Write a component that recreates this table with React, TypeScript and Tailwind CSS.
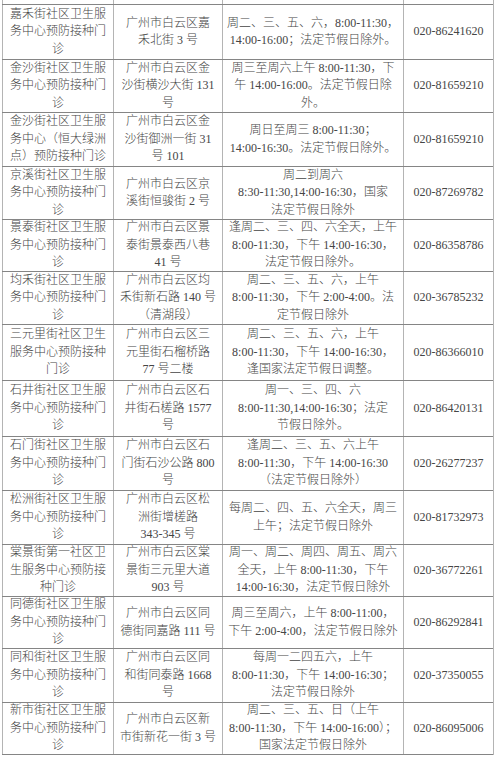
import React from 'react';

type Row = {
  h: string;
  name: string[];
  addr: string[];
  hours: string[];
  tel: string;
};

const rows: Row[] = [
  {
    h: 'h-[55px]',
    name: ['嘉禾街社区卫生服', '务中心预防接种门', '诊'],
    addr: ['广州市白云区嘉', '禾北街 3 号'],
    hours: ['周二、三、五、六，8:00-11:30，', '14:00-16:00；法定节假日除外。'],
    tel: '020-86241620',
  },
  {
    h: 'h-[53px]',
    name: ['金沙街社区卫生服', '务中心预防接种门', '诊'],
    addr: ['广州市白云区金', '沙街横沙大街 131', '号'],
    hours: ['周三至周六上午 8:00-11:30，下', '午 14:00-16:00。法定节假日除', '外。'],
    tel: '020-81659210',
  },
  {
    h: 'h-[54px]',
    name: ['金沙街社区卫生服', '务中心（恒大绿洲', '点）预防接种门诊'],
    addr: ['广州市白云区金', '沙街御洲一街 31', '号 101'],
    hours: ['周日至周三 8:00-11:30；', '14:00-16:30。法定节假日除外。'],
    tel: '020-81659210',
  },
  {
    h: 'h-[53px]',
    name: ['京溪街社区卫生服', '务中心预防接种门', '诊'],
    addr: ['广州市白云区京', '溪街恒骏街 2 号'],
    hours: ['周二到周六', '8:30-11:30,14:00-16:30，国家', '法定节假日除外'],
    tel: '020-87269782',
  },
  {
    h: 'h-[52px]',
    name: ['景泰街社区卫生服', '务中心预防接种门', '诊'],
    addr: ['广州市白云区景', '泰街景泰西八巷', '41 号'],
    hours: ['逢周二、三、四、六全天，上午', '8:00-11:30，下午 14:00-16:30，', '法定节假日除外。'],
    tel: '020-86358786',
  },
  {
    h: 'h-[53px]',
    name: ['均禾街社区卫生服', '务中心预防接种门', '诊'],
    addr: ['广州市白云区均', '禾街新石路 140 号', '（清湖段）'],
    hours: ['周二、三、五、六，上午', '8:00-11:30，下午 2:00-4:00。法', '定节假日除外'],
    tel: '020-36785232',
  },
  {
    h: 'h-[56px]',
    name: ['三元里街社区卫生', '服务中心预防接种', '门诊'],
    addr: ['广州市白云区三', '元里街石榴桥路', '77 号二楼'],
    hours: ['周二、三、五、六，上午', '8:00-11:30，下午 14:00-16:30，', '逢国家法定节假日调整。'],
    tel: '020-86366010',
  },
  {
    h: 'h-[56px]',
    name: ['石井街社区卫生服', '务中心预防接种门', '诊'],
    addr: ['广州市白云区石', '井街石槎路 1577', '号'],
    hours: ['周一、三、四、六', '8:00-11:30,14:00-16:30；法定', '节假日除外。'],
    tel: '020-86420131',
  },
  {
    h: 'h-[54px]',
    name: ['石门街社区卫生服', '务中心预防接种门', '诊'],
    addr: ['广州市白云区石', '门街石沙公路 800', '号'],
    hours: ['逢周二、三、五、六上午', '8:00-11:30，下午 14:00-16:30', '（法定节假日除外）'],
    tel: '020-26277237',
  },
  {
    h: 'h-[54px]',
    name: ['松洲街社区卫生服', '务中心预防接种门', '诊'],
    addr: ['广州市白云区松', '洲街增槎路', '343-345 号'],
    hours: ['每周二、四、五、六全天，周三', '上午；法定节假日除外'],
    tel: '020-81732973',
  },
  {
    h: 'h-[52px]',
    name: ['棠景街第一社区卫', '生服务中心预防接', '种门诊'],
    addr: ['广州市白云区棠', '景街三元里大道', '903 号'],
    hours: ['周一、周二、周四、周五、周六', '全天，上午 8:00-11:30，下午', '14:00-16:30，法定节假日除外'],
    tel: '020-36772261',
  },
  {
    h: 'h-[52px]',
    name: ['同德街社区卫生服', '务中心预防接种门', '诊'],
    addr: ['广州市白云区同', '德街同嘉路 111 号'],
    hours: ['周三至周六，上午 8:00-11:00，', '下午 2:00-4:00，法定节假日除外'],
    tel: '020-86292841',
  },
  {
    h: 'h-[54px]',
    name: ['同和街社区卫生服', '务中心预防接种门', '诊'],
    addr: ['广州市白云区同', '和街同泰路 1668', '号'],
    hours: ['每周一二四五六，上午', '8:00-11:30，下午 14:00-16:30；', '法定节假日除外'],
    tel: '020-37350055',
  },
  {
    h: 'h-[52px]',
    name: ['新市街社区卫生服', '务中心预防接种门', '诊'],
    addr: ['广州市白云区新', '市街新花一街 3 号'],
    hours: ['周二、三、五、日（上午', '8:00-11:30，下午 14:00-16:00）；', '国家法定节假日除外'],
    tel: '020-86095006',
  },
];

const Cell = ({ lines, w }: { lines: string[]; w: string }) => (
  <div className={`${w} shrink-0 border-l border-[#b4b4b4] flex flex-col items-center justify-center`}>
    {lines.map((l, i) => (
      <span key={i} className="whitespace-nowrap leading-[17.5px]">
        {l}
      </span>
    ))}
  </div>
);

const App: React.FC = () => {
  return (
    <div
      className="w-[496px] h-[757px] bg-white pl-[2px] overflow-hidden text-[12px] font-light text-[#454545]"
      style={{ fontFamily: '"Liberation Serif", "Noto Sans CJK SC", serif' }}
    >
      <div className="w-[492px] border-r border-[#b4b4b4]">
        <div className="flex h-[5px] border-b border-[#858585]">
          <div className="w-[111px] border-l border-[#b4b4b4]" />
          <div className="w-[109px] border-l border-[#b4b4b4]" />
          <div className="w-[181px] border-l border-[#b4b4b4]" />
          <div className="w-[90px] border-l border-[#b4b4b4]" />
        </div>
        {rows.map((r, i) => (
          <div key={i} className={`flex ${r.h} border-b border-[#858585] box-border`}>
            <Cell lines={r.name} w="w-[111px]" />
            <Cell lines={r.addr} w="w-[109px]" />
            <Cell lines={r.hours} w="w-[181px]" />
            <Cell lines={[r.tel]} w="w-[90px]" />
          </div>
        ))}
      </div>
    </div>
  );
};

export default App;
